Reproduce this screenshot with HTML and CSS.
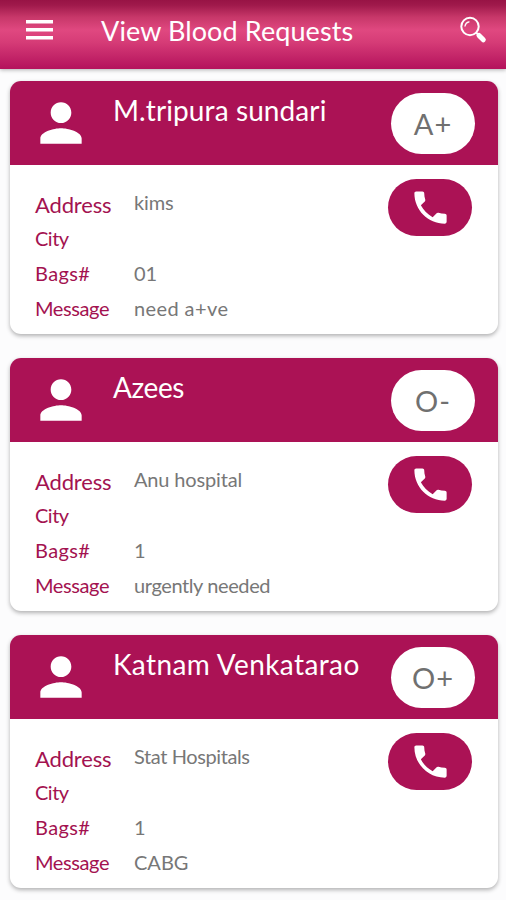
FILE: index.html
```html
<!DOCTYPE html>
<html lang="en">
<head>
    <meta charset="UTF-8" />
    <meta name="viewport" content="width=device-width, initial-scale=1.0"/>
    <title>View Blood Requests</title>
    <link rel="stylesheet" href="styles.css">
</head>
<body>
    <!-- Shared icons -->
    <svg class="icon-defs" width="0" height="0">
        <symbol id="person" viewBox="0 0 24 24">
            <path d="M12 12c2.21 0 4-1.79 4-4s-1.79-4-4-4-4 1.79-4 4 1.79 4 4 4zm0 2c-2.67 0-8 1.34-8 4v2h16v-2c0-2.66-5.33-4-8-4z"/>
        </symbol>
        <symbol id="phone" viewBox="0 0 24 24">
            <path d="M6.62 10.79c1.44 2.83 3.76 5.14 6.59 6.59l2.2-2.2c.27-.27.67-.36 1.02-.24 1.12.37 2.33.57 3.57.57.55 0 1 .45 1 1V20c0 .55-.45 1-1 1-9.39 0-17-7.61-17-17 0-.55.45-1 1-1h3.5c.55 0 1 .45 1 1 0 1.25.2 2.45.57 3.57.11.35.03.74-.25 1.02l-2.2 2.2z"/>
        </symbol>
    </svg>

    <div class="header">
        <button class="menu-btn" aria-label="Menu">
            <svg width="27" height="20" viewBox="0 0 27 20"><path d="M0 0h27v3.600H0zM0 8h27v3.600H0zM0 16h27v3.600H0z"/></svg>
        </button>
        <h1>View Blood Requests</h1>
        <button class="search-btn" aria-label="Search">
            <svg width="28" height="28" viewBox="0 0 28 28">
                <circle cx="11" cy="10.500" r="8.700" fill="none" stroke="#fff" stroke-width="2"/>
                <path d="M6 10a5.200 5.200 0 0 1 4-4.200" fill="none" stroke="#fff" stroke-width="1.300" stroke-linecap="round"/>
                <path d="M17 16.500l3 3" stroke="#fff" stroke-width="2"/>
                <path d="M20 19.500l4.300 4.300" stroke="#fff" stroke-width="5" stroke-linecap="round"/>
            </svg>
        </button>
    </div>

    <div class="request-list">
        <div class="card">
            <div class="card-header">
                <svg class="avatar"><use href="#person"/></svg>
                <h2>M.tripura sundari</h2>
                <span class="blood-group">A+</span>
            </div>
            <div class="card-body">
                <dl class="details">
                    <dt class="address">Address</dt><dd class="address-value">kims</dd>
                    <dt class="city">City</dt><dd></dd>
                    <dt class="bags">Bags#</dt><dd>01</dd>
                    <dt class="message">Message</dt><dd class="loose">need a+ve</dd>
                </dl>
                <button class="call-btn" aria-label="Call"><svg><use href="#phone"/></svg></button>
            </div>
        </div>

        <div class="card">
            <div class="card-header">
                <svg class="avatar"><use href="#person"/></svg>
                <h2 class="tight">Azees</h2>
                <span class="blood-group">O-</span>
            </div>
            <div class="card-body">
                <dl class="details">
                    <dt class="address">Address</dt><dd class="address-value">Anu hospital</dd>
                    <dt class="city">City</dt><dd></dd>
                    <dt class="bags">Bags#</dt><dd>1</dd>
                    <dt class="message">Message</dt><dd class="tight">urgently needed</dd>
                </dl>
                <button class="call-btn" aria-label="Call"><svg><use href="#phone"/></svg></button>
            </div>
        </div>

        <div class="card">
            <div class="card-header">
                <svg class="avatar"><use href="#person"/></svg>
                <h2 class="loose">Katnam Venkatarao</h2>
                <span class="blood-group">O+</span>
            </div>
            <div class="card-body">
                <dl class="details">
                    <dt class="address">Address</dt><dd class="address-value tight">Stat Hospitals</dd>
                    <dt class="city">City</dt><dd></dd>
                    <dt class="bags">Bags#</dt><dd>1</dd>
                    <dt class="message">Message</dt><dd>CABG</dd>
                </dl>
                <button class="call-btn" aria-label="Call"><svg><use href="#phone"/></svg></button>
            </div>
        </div>
    </div>
</body>
</html>
```

FILE: styles.css
```css
* {
    box-sizing: border-box;
}

body {
    margin: 0;
    height: 900px;
    overflow: hidden;
    font-family: 'Lato', sans-serif;
    background-color: #fcfcfd;
}

.icon-defs {
    display: block;
}

button {
    padding: 0;
    border: none;
    background: none;
    cursor: pointer;
}

button svg {
    display: block;
    fill: #fff;
}

.header {
    display: flex;
    height: 69px;
    padding: 0 19px 0 26px;
    background: linear-gradient(to bottom, #981345 0, #9f194b 5px, #c73769 17px, #e04880 30px, #d63c77 42px, #b5135d 68px);
    box-shadow: 0 1px 4px rgba(0, 0, 0, 0.3);
}

.menu-btn {
    align-self: flex-start;
    margin-top: 20px;
}

.header h1 {
    flex: 1;
    margin: 0 0 0 48px;
    font-size: 27px;
    font-weight: 400;
    line-height: 61px;
    letter-spacing: 0.1px;
    color: #fff;
    white-space: nowrap;
}

.search-btn {
    align-self: flex-start;
    margin-top: 16px;
}

.request-list {
    display: flex;
    flex-direction: column;
    gap: 24px;
    padding: 12px 8px 0 10px;
}

.card {
    height: 253px;
    border-radius: 11px;
    overflow: hidden;
    background-color: #fff;
    box-shadow: 0 2px 4px rgba(0, 0, 0, 0.3);
}

.card-header {
    display: flex;
    height: 84px;
    padding: 12px 23px 0 20px;
    background-color: #ab1255;
    color: #fff;
}

.avatar {
    width: 62px;
    height: 62px;
    margin-top: -1px;
    fill: #fff;
}

.card-header h2 {
    flex: 1;
    margin: 0 0 0 21px;
    font-size: 28px;
    font-weight: 400;
    line-height: 35px;
    letter-spacing: 0.1px;
    white-space: nowrap;
}

.blood-group {
    width: 84px;
    height: 61px;
    border-radius: 31px;
    background-color: #fff;
    color: #707070;
    font-size: 29px;
    font-weight: 400;
    line-height: 61px;
    letter-spacing: 1px;
    text-align: center;
}

.card-body {
    display: flex;
    justify-content: space-between;
    align-items: flex-start;
    padding: 14px 26px 0 25px;
}

.details {
    display: grid;
    grid-template-columns: 99px auto;
    grid-template-rows: 33px 35px 35px 35px;
    margin: 9px 0 0;
    line-height: 34px;
    white-space: nowrap;
}

.details dt {
    color: #a31250;
    font-size: 20px;
}

.details .address {
    font-size: 22px;
    letter-spacing: -0.15px;
}

.details .city {
    letter-spacing: -0.5px;
}

.details .bags {
    letter-spacing: 0.4px;
}

.details .message {
    letter-spacing: -0.4px;
}

.details dd {
    margin: 0;
    color: #777;
    font-size: 20px;
}

.details .address-value {
    line-height: 29px;
    letter-spacing: -0.15px;
}

.card .tight {
    letter-spacing: -0.4px;
}

.card .loose {
    letter-spacing: 0.4px;
}

.call-btn {
    display: flex;
    align-items: center;
    justify-content: center;
    width: 84px;
    height: 57px;
    border-radius: 29px;
    background-color: #ab1255;
}

.call-btn svg {
    width: 43px;
    height: 43px;
}
```
